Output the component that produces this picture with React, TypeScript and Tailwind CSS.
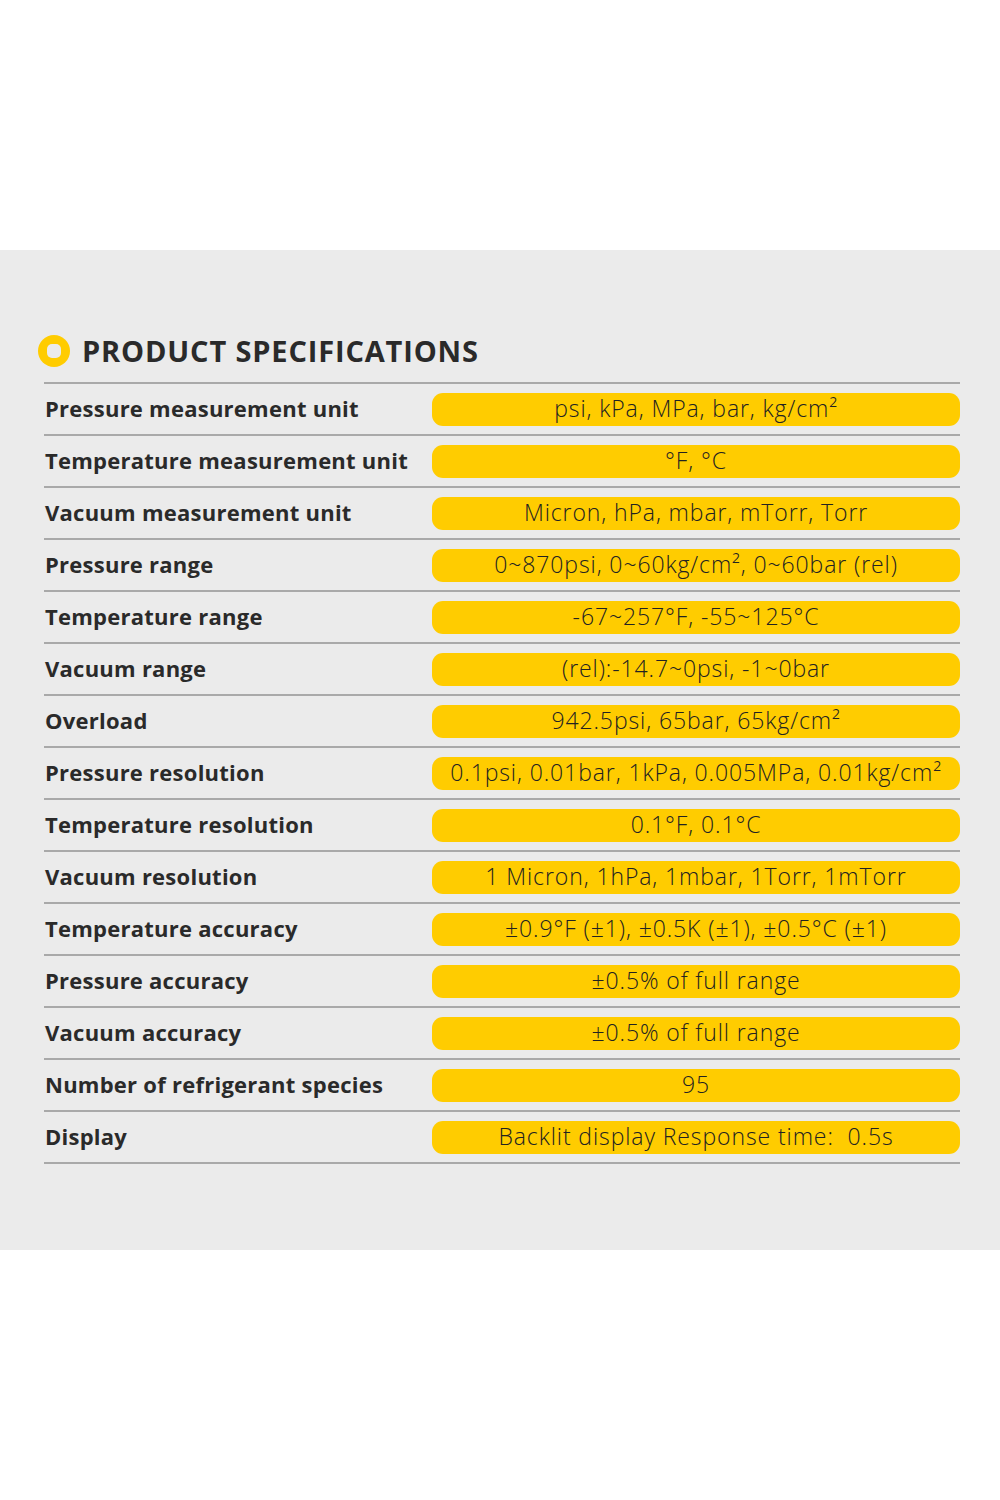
const specs: [string, string][] = [
  ['Pressure measurement unit', 'psi, kPa, MPa, bar, kg/cm²'],
  ['Temperature measurement unit', '°F, °C'],
  ['Vacuum measurement unit', 'Micron, hPa, mbar, mTorr, Torr'],
  ['Pressure range', '0~870psi, 0~60kg/cm², 0~60bar (rel)'],
  ['Temperature range', '-67~257°F, -55~125°C'],
  ['Vacuum range', '(rel):-14.7~0psi, -1~0bar'],
  ['Overload', '942.5psi, 65bar, 65kg/cm²'],
  ['Pressure resolution', '0.1psi, 0.01bar, 1kPa, 0.005MPa, 0.01kg/cm²'],
  ['Temperature resolution', '0.1°F, 0.1°C'],
  ['Vacuum resolution', '1 Micron, 1hPa, 1mbar, 1Torr, 1mTorr'],
  ['Temperature accuracy', '±0.9°F (±1), ±0.5K (±1), ±0.5°C (±1)'],
  ['Pressure accuracy', '±0.5% of full range'],
  ['Vacuum accuracy', '±0.5% of full range'],
  ['Number of refrigerant species', '95'],
  ['Display', 'Backlit display Response time:  0.5s'],
]

export default function App() {
  return (
    <div className="w-[1000px] h-[1500px] bg-white font-['Open_Sans',sans-serif] text-[#2a2a2a]">
      <div className="h-[250px]" />
      <div className="h-[1000px] bg-[#ebebeb] pt-[83px] pl-[44px] pr-[40px]">
        {/* Header */}
        <div className="flex items-center h-[36px] -ml-[6px]">
          <div className="w-[32px] h-[32px] rounded-full bg-[#ffcc00] flex items-center justify-center">
            <div className="w-[14px] h-[14px] rounded-[5px] bg-[#ebebeb]" />
          </div>
          <h2 className="ml-[12px] text-[29px] font-bold tracking-[0.85px] text-[#2a2a2a]">
            PRODUCT SPECIFICATIONS
          </h2>
        </div>

        {/* Table */}
        <div className="mt-[13px] border-t-2 border-[#a9a9a9]">
          {specs.map(([label, value]) => (
            <div
              key={label}
              className="flex items-center h-[52px] border-b-2 border-[#a9a9a9]"
            >
              <div className="w-[388px] shrink-0 text-[22px] font-bold tracking-[0.25px] leading-none pb-[2px] pl-[1px]">
                {label}
              </div>
              <div className="flex-1 h-[33px] rounded-[11px] bg-[#ffcc00] flex items-center justify-center text-[23px] font-light tracking-[0.9px] leading-none text-[#222] whitespace-pre pb-[2px]">
                {value}
              </div>
            </div>
          ))}
        </div>
      </div>
    </div>
  )
}
